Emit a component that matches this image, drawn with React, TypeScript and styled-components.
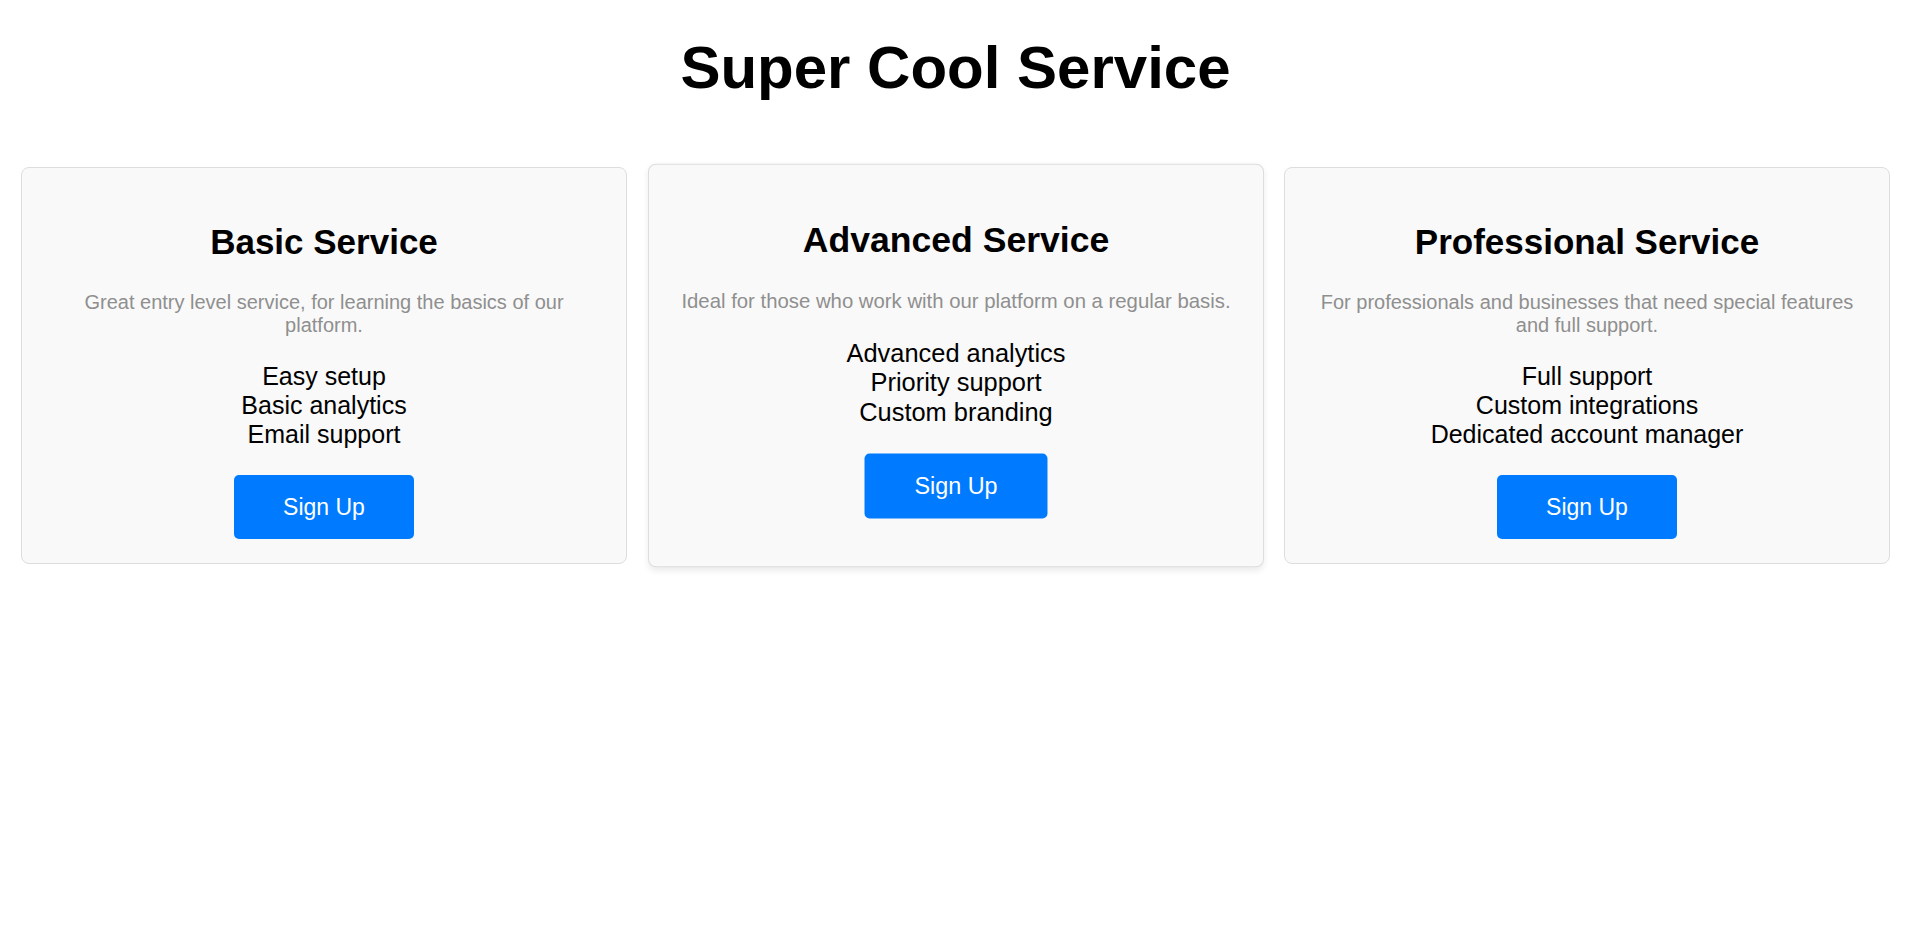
import styled, { createGlobalStyle } from 'styled-components';

const GlobalStyle = createGlobalStyle`
    body {
        margin: 0;
        background: #ffffff;
        font-family: "Liberation Sans", Arial, sans-serif;
        color: #000000;
    }
`;

const Page = styled.main`
    padding: 0 18px 40px 21px;
`;

const Title = styled.h1`
    margin: 33px 0 65px;
    text-align: center;
    font-size: 60px;
    font-weight: bold;
    line-height: normal;
`;

const CardRow = styled.section`
    display: flex;
    align-items: stretch;
    gap: 25.5px;
`;

const Card = styled.div<{ $featured?: boolean }>`
    position: relative;
    z-index: ${({ $featured }) => ($featured ? 1 : 0)};
    flex: 1;
    min-width: 0;
    padding: 25px 25px 24px;
    text-align: center;
    background: #f9f9f9;
    border: 1px solid #dddddd;
    border-radius: 8px;
    transform: ${({ $featured }) => ($featured ? 'scale(1.0165)' : 'none')};
    box-shadow: ${({ $featured }) =>
        $featured ? '0 3px 6px rgba(0, 0, 0, 0.08)' : 'none'};
`;

const CardTitle = styled.h2`
    margin: 29px 0 29px;
    font-size: 35px;
    font-weight: bold;
    line-height: normal;
`;

const Description = styled.p`
    margin: 0 0 25px;
    font-size: 20px;
    line-height: normal;
    color: #8f8f8f;
`;

const Features = styled.ul`
    list-style: none;
    margin: 0 0 26px;
    padding: 0;
    font-size: 25px;
    line-height: normal;
`;

const SignUpButton = styled.button`
    padding: 19px 49px;
    border: none;
    border-radius: 5px;
    background: #007bff;
    color: #ffffff;
    font-family: "Liberation Sans", Arial, sans-serif;
    font-size: 23px;
    line-height: 26px;
    cursor: pointer;
`;

const services = [
    {
        name: "Basic Service",
        description: "Great entry level service, for learning the basics of our platform.",
        features: ["Easy setup", "Basic analytics", "Email support"]
    },
    {
        name: "Advanced Service",
        description: "Ideal for those who work with our platform on a regular basis.",
        features: ["Advanced analytics", "Priority support", "Custom branding"],
        featured: true
    },
    {
        name: "Professional Service",
        description: "For professionals and businesses that need special features and full support.",
        features: ["Full support", "Custom integrations", "Dedicated account manager"]
    }
];

export default function App() {
    return (
        <>
            <GlobalStyle />
            <Page>
                <Title>Super Cool Service</Title>
                <CardRow>
                    {services.map((service) => (
                        <Card key={service.name} $featured={service.featured}>
                            <CardTitle>{service.name}</CardTitle>
                            <Description>{service.description}</Description>
                            <Features>
                                {service.features.map((feature) => (
                                    <li key={feature}>{feature}</li>
                                ))}
                            </Features>
                            <SignUpButton>Sign Up</SignUpButton>
                        </Card>
                    ))}
                </CardRow>
            </Page>
        </>
    );
}
